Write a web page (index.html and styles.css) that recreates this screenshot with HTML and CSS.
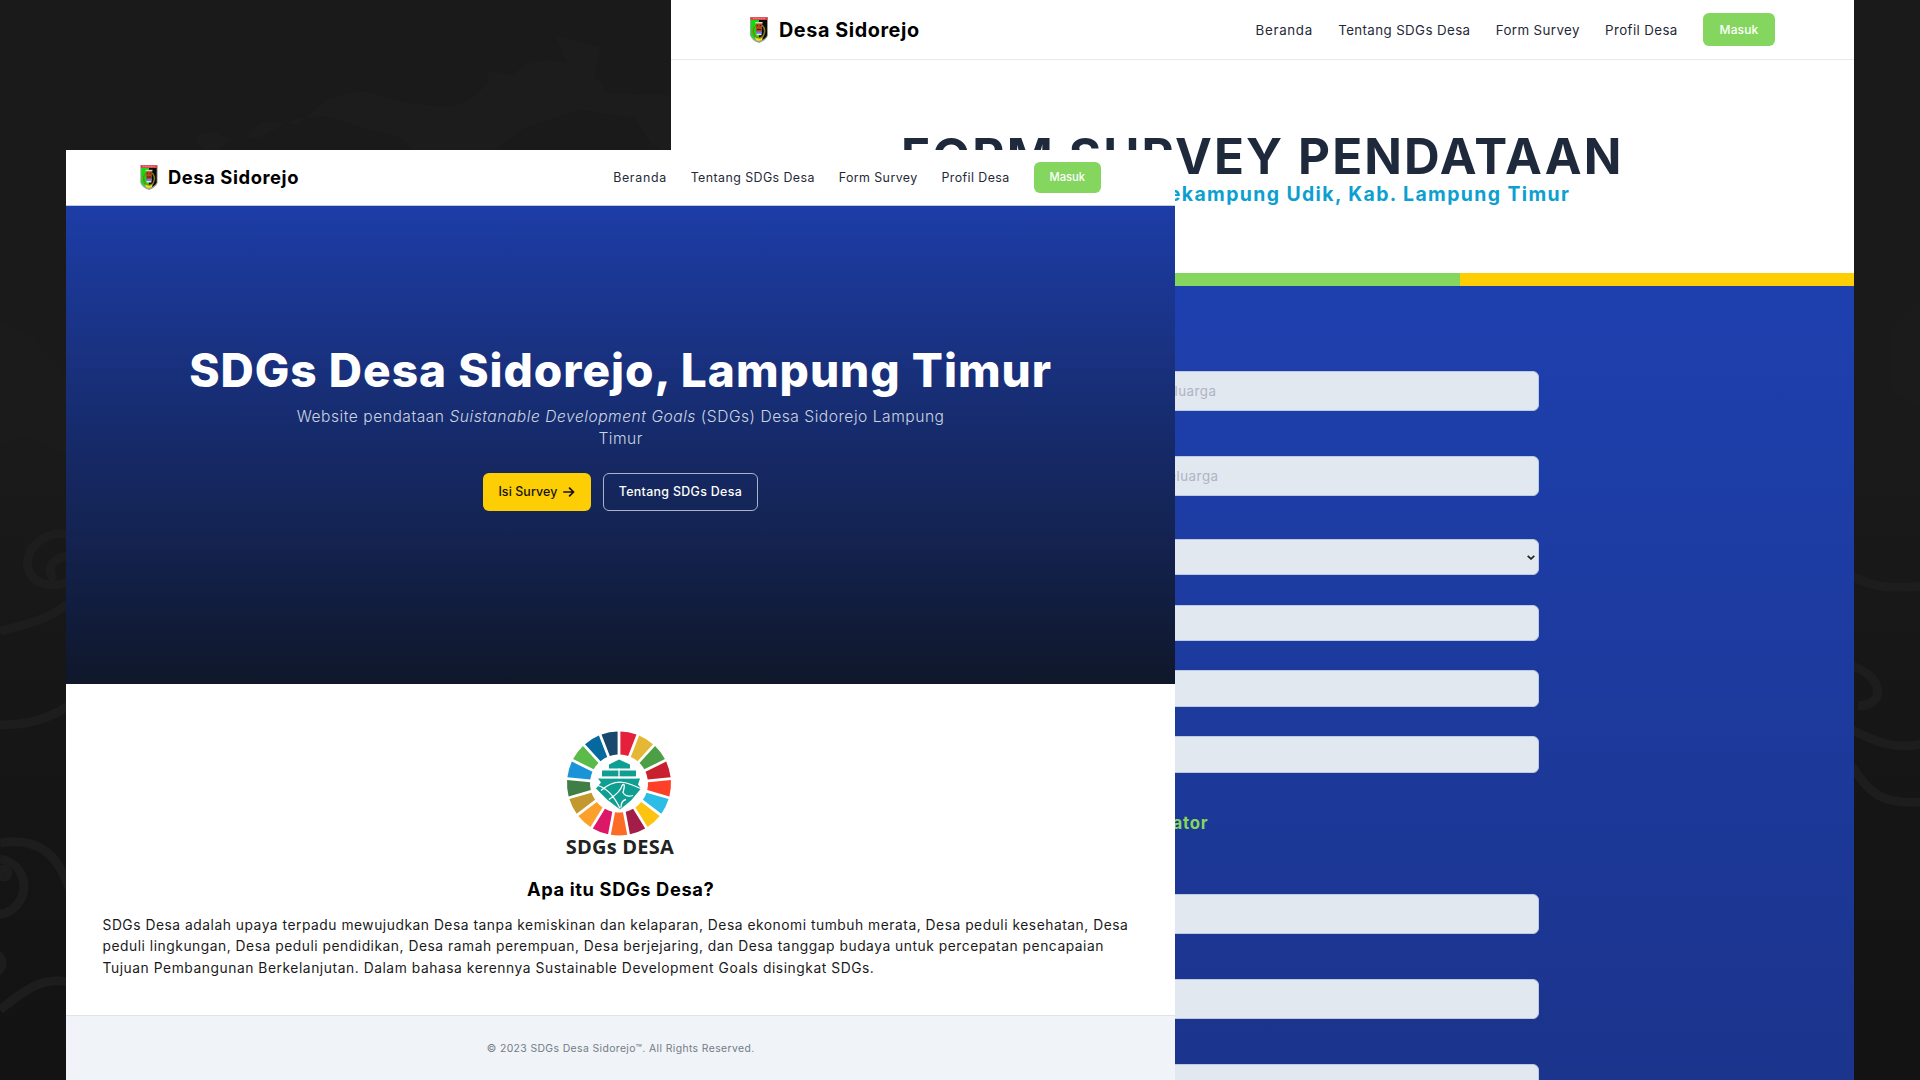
FILE: index.html
```html
<!DOCTYPE html>
<html lang="id">
<head>
<meta charset="utf-8">
<title>SDGs Desa Sidorejo</title>
<link rel="stylesheet" href="styles.css">
</head>
<body>
<svg class="backdrop" viewBox="0 0 1920 1080" aria-hidden="true">
  <g fill="#1c1c1c">
    <path d="M195 140q8-12 22-7l12 5-8 11q-18 6-26-9zM247 138q8-18 26-16l25 3q12-12 24-22 22-13 47-11l35 10 40 5q30-4 45-27l-2-10 25 5q22-22 55-12l-12-28 45 12-5 30q12 8 10 16l65 2v60l-20-12-15-25-55-8-55 18-30 22-42 22-30-10-22-24-38-10-38-12-30 3-36 19-24-1-17 12q-14-2-18-11z"/>
    <path d="M1890 330l30-30v110l-28-20zM0 320l30 15 36 40v80l-40-20-26 10z" opacity=".6"/>
  </g>
  <g fill="none" stroke="#1d1d1d" stroke-width="9">
    <path d="M70 534C40 530 24 552 28 568C34 590 60 586 72 580M72 556C56 556 44 566 54 580M0 631C30 624 50 618 68 604M0 725C30 725 50 718 68 706M0 843C40 836 58 856 70 890M0 859C26 864 30 892 16 906Q8 914 0 914M0 1010C24 990 44 976 68 982"/>
    <path d="M1852 576C1876 590 1900 588 1922 586M1852 666C1884 676 1886 706 1858 706M1852 730C1876 742 1896 750 1922 744M1852 766C1870 796 1884 804 1922 802"/>
    <circle cx="4" cy="873" r="4"/><circle cx="-8" cy="963" r="10"/>
  </g>
</svg>

<svg class="defs" aria-hidden="true">
  <symbol id="crest" viewBox="0 0 18 26">
    <path d="M0 0h18v18q-1 5-9 8q-8-3-9-8z" fill="#99a099"/>
    <path d="M1 3h8v21q-7-3-8-6z" fill="#0be00b"/>
    <path d="M9 3h8v15q-1 4-8 6z" fill="#0a0a0a"/>
    <path d="M.5.4h17v2.5H.5z" fill="#ef3340"/>
    <path d="M3 1.6h12" stroke="#f8a9a9" stroke-width=".8" stroke-dasharray="1 .6"/>
    <path d="M6 8Q2 12 4 17q1 4 5 4t5-4q2-5-2-9" fill="none" stroke="#8b7a18" stroke-width="1.5"/>
    <path d="M6 6h6v8q-1 4-3 4t-3-4z" fill="#a94a20"/>
    <path d="M5.4 5h7.2v1.5H5.4z" fill="#ddd8c0"/>
    <path d="M7 8h1v1H7zM10 8h1v1h-1zM7 12h4v1H7z" fill="#402008"/>
    <path d="M6 14.5h6v2.2H6z" fill="#6a7cf0"/><path d="M6.5 16.7h5v1.5h-5z" fill="#f3e6de"/>
    <path d="M5 20q4 3 8 0l-1 3q-3 2-6 0z" fill="#efe11c"/>
  </symbol>
</svg>

<section class="window window-form">
  <header class="nav">
    <div class="brand"><svg class="crest"><use href="#crest"/></svg><span>Desa Sidorejo</span></div>
    <nav class="links"><a class="home">Beranda</a><a>Tentang SDGs Desa</a><a>Form Survey</a><a>Profil Desa</a><a class="login">Masuk</a></nav>
  </header>
  <div class="form-head">
    <h1>FORM SURVEY PENDATAAN</h1>
    <p>Desa Sidorejo, Kec. Sekampung Udik, Kab. Lampung Timur</p>
  </div>
  <div class="stripe"><i></i><i></i><i></i></div>
  <form class="survey">
    <div class="field tall number"><span>Nomor Kartu Keluarga</span></div>
    <div class="field tall head"><span>Nama Kepala Keluarga</span></div>
    <div class="field select"><svg viewBox="0 0 8 5"><path d="M.7.8 4 3.9 7.3.8" fill="none" stroke="#222" stroke-width="1.7"/></svg></div>
    <div class="field"></div>
    <div class="field"></div>
    <div class="field"></div>
    <h2>Data Enumerator</h2>
    <div class="field tall"></div>
    <div class="field tall"></div>
    <div class="field tall"></div>
  </form>
</section>

<section class="window window-home">
  <header class="nav">
    <div class="brand"><svg class="crest"><use href="#crest"/></svg><span>Desa Sidorejo</span></div>
    <nav class="links"><a class="home">Beranda</a><a>Tentang SDGs Desa</a><a>Form Survey</a><a>Profil Desa</a><a class="login">Masuk</a></nav>
  </header>
  <div class="hero">
    <h1>SDGs Desa Sidorejo, Lampung Timur</h1>
    <p>Website pendataan <em>Suistanable Development Goals</em> (SDGs) Desa Sidorejo Lampung<br>Timur</p>
    <div class="actions">
      <a class="btn primary"><span>Isi Survey</span><svg viewBox="0 0 12 10"><path d="M.8 5h9.6M6.6 1.2 10.6 5 6.6 8.8" fill="none" stroke="#111" stroke-width="1.7" stroke-linecap="round" stroke-linejoin="round"/></svg></a>
      <a class="btn outline">Tentang SDGs Desa</a>
    </div>
  </div>
  <div class="about">
    <svg class="logo" viewBox="0 0 140 128">
      <g id="segments" transform="translate(70 54.5)"></g>
      <g transform="translate(70 54.5)">
        <path d="M-10-19 0-24l11 5v4h-21zM-17-13H17v6H-17zM-21-5H21L19 1 22 5 12 17 1 26-12 16-23 5l5-6z" fill="#0f9f92"/>
        <path d="M0-15v10M-18-6H18M-21 2Q-8 6 1 25M-18 7Q-4-6 12 1T22 4M-10 16Q2 8 3 2 7-2 4 9 7 14 14 12M2 24Q2 17 7 16" fill="none" stroke="#fff" stroke-width="1.3"/>
      </g>
      <text x="70.8" y="124.7" text-anchor="middle" textLength="108" class="logo-text">SDGs DESA</text>
    </svg>
    <h2>Apa itu SDGs Desa?</h2>
    <p>SDGs Desa adalah upaya terpadu mewujudkan Desa tanpa kemiskinan dan kelaparan, Desa ekonomi tumbuh merata, Desa peduli kesehatan, Desa<br>peduli lingkungan, Desa peduli pendidikan, Desa ramah perempuan, Desa berjejaring, dan Desa tanggap budaya untuk percepatan pencapaian<br><span class="last">Tujuan Pembangunan Berkelanjutan. Dalam bahasa kerennya Sustainable Development Goals disingkat SDGs.</span></p>
  </div>
  <footer>© 2023 SDGs Desa Sidorejo™. All Rights Reserved.</footer>
</section>
<script src="wheel.js"></script>
</body>
</html>
```
FILE: styles.css
```css
* { box-sizing: border-box; margin: 0; padding: 0; }
body {
  position: relative;
  width: 1920px;
  height: 1080px;
  overflow: hidden;
  background: linear-gradient(#1a1a1a 0 40%, #151515 75%, #131313);
  font-family: "Inter", "Liberation Sans", sans-serif;
}
.backdrop { position: absolute; inset: 0; width: 1920px; height: 1080px; }
.defs { position: absolute; width: 0; height: 0; }
.window { position: absolute; display: flex; flex-direction: column; background: #fff; overflow: hidden; }
.window-form { left: 670.5px; top: 0; width: 1183.5px; height: 1080px; }
.window-home { left: 66px; top: 149.5px; width: 1109.3px; height: 930.5px; }

/* navigation */
.nav { display: flex; flex: none; align-items: center; justify-content: space-between; white-space: nowrap; }
.brand { display: flex; align-items: center; font-weight: 700; color: #000; }
.links { display: flex; align-items: center; color: #1f2937; }
.login { display: flex; align-items: center; justify-content: center; background: #84d65f; color: #fff; font-weight: 500; border-radius: 6px; }
.window-form .nav { height: 60px; padding: 0 79px 0 78.5px; border-bottom: 1px solid #e7e9ec; }
.window-form .brand { gap: 10px; font-size: 19.8px; letter-spacing: .58px; }
.window-form .crest { width: 20px; height: 26px; }
.window-form .links { gap: 25.3px; font-size: 13.3px; letter-spacing: .4px; }
.window-form .home { letter-spacing: .7px; }
.window-form .login { width: 72px; height: 33px; font-size: 12px; letter-spacing: .14px; }
.window-home .nav { height: 56px; padding: 0 74.3px 0 74px; border-bottom: 1px solid #c3cbdf; }
.window-home .brand { gap: 10px; font-size: 18.4px; letter-spacing: .56px; }
.window-home .crest { width: 18px; height: 25px; }
.window-home .links { gap: 23.8px; font-size: 12.4px; letter-spacing: .43px; }
.window-home .home { letter-spacing: .7px; }
.window-home .login { width: 67.5px; height: 31px; font-size: 11.2px; letter-spacing: 0; }

/* survey window */
.form-head { flex: none; height: 213px; padding-top: 65.5px; text-align: center; white-space: nowrap; }
.form-head h1 { font-size: 49.4px; line-height: 60px; font-weight: 700; letter-spacing: 2.1px; color: #1e293b; }
.form-head p { margin-top: -4.5px; padding-right: 15px; font-size: 19.4px; line-height: 26px; font-weight: 700; letter-spacing: 1.4px; color: #0c9fd0; }
.stripe { flex: none; display: grid; grid-template-columns: repeat(3, 1fr); height: 13px; }
.stripe i:nth-child(1) { background: #1c9fd0; }
.stripe i:nth-child(2) { background: #84d65f; }
.stripe i:nth-child(3) { background: #fdce03; }
.survey { flex: none; height: 794px; padding: 85px 315.5px 0; background: linear-gradient(#1e40af, #1b348c); overflow: hidden; }
.field { display: flex; align-items: center; height: 36.5px; margin-bottom: 29.3px; padding: 0 12px; background: #e2e8f0; border: 1px solid #bcc9e2; border-radius: 6px; color: #afb4c2; font-size: 13.3px; letter-spacing: .5px; white-space: nowrap; }
.field.tall { height: 40px; margin-bottom: 45.4px; }
.field.number, .field.head { justify-content: flex-end; padding-right: 321px; }
.field.head { margin-bottom: 42.4px; padding-right: 319px; }
.field.select { justify-content: flex-end; padding: 0 3px; }
.field.select svg { width: 8px; height: 5px; }
.survey h2 { width: 222.5px; margin: 36.5px 0 55px; font-size: 16.8px; line-height: 29.5px; font-weight: 700; letter-spacing: .8px; color: #84d65f; text-align: right; white-space: nowrap; }

/* home window */
.hero { flex: none; height: 478px; padding-top: 137px; background: linear-gradient(#1d3da7, #0f172a); text-align: center; white-space: nowrap; }
.hero h1 { font-size: 46px; line-height: 54px; font-weight: 800; letter-spacing: 1px; color: #fff; }
.hero p { margin-top: 9.5px; font-size: 15.6px; line-height: 21.6px; font-weight: 300; letter-spacing: .52px; color: #cbd5e1; }
.actions { display: flex; justify-content: center; gap: 12px; margin-top: 23.5px; }
.btn { display: flex; align-items: center; justify-content: center; height: 38.5px; border-radius: 6px; font-size: 12.4px; font-weight: 500; }
.btn.primary { width: 107.5px; gap: 6px; background: #fdce03; color: #111; letter-spacing: .1px; }
.btn.primary svg { width: 12px; height: 10px; }
.btn.outline { width: 155.5px; border: 1px solid #aab3c9; color: #fff; letter-spacing: .33px; }
.about { flex: none; display: flex; flex-direction: column; align-items: center; height: 331.5px; padding-top: 45px; }
.logo { width: 140px; height: 128px; margin-left: -3px; overflow: visible; }
.logo-text { font: 700 20px "Open Sans", sans-serif; fill: #222; }
.about h2 { margin-top: 18px; font-size: 18.3px; line-height: 28px; font-weight: 700; letter-spacing: .62px; color: #000; }
.about p { align-self: stretch; margin-top: 12px; padding-left: 36.5px; font-size: 13.8px; line-height: 21.6px; letter-spacing: .53px; color: #1a1a1a; white-space: nowrap; }
.about .last { letter-spacing: .56px; }
footer { flex: 1; border-top: 1px solid #e0e4e9; padding-top: 23px; background: #f0f3f8; font-size: 10.4px; line-height: 20px; letter-spacing: .39px; color: #747b86; text-align: center; }
```
FILE: wheel.js
```js
// Builds the 17 coloured segments of the SDGs wheel, clockwise from the top.
const colors = ['#e5203b', '#e4b735', '#4c9f45', '#c9202f', '#ff4028', '#2bbde6', '#fcc310', '#a21d47', '#fb6c27', '#dd1768', '#fd9f2b', '#c2982f', '#3f7e44', '#1a94d8', '#5bbb48', '#05699f', '#19486c'];
const group = document.getElementById('segments');
const step = 2 * Math.PI / colors.length;
const point = (r, a) => (r * Math.sin(a)).toFixed(2) + ' ' + (-r * Math.cos(a)).toFixed(2);
colors.forEach((color, i) => {
  const a = i * step, b = a + step;
  const path = document.createElementNS('http://www.w3.org/2000/svg', 'path');
  const o = 1.4 / 52, n = 1.4 / 29;
  path.setAttribute('d', `M${point(52, a + o)}A52 52 0 0 1 ${point(52, b - o)}L${point(29, b - n)}A29 29 0 0 0 ${point(29, a + n)}Z`);
  path.setAttribute('fill', color);
  group.appendChild(path);
});
```
